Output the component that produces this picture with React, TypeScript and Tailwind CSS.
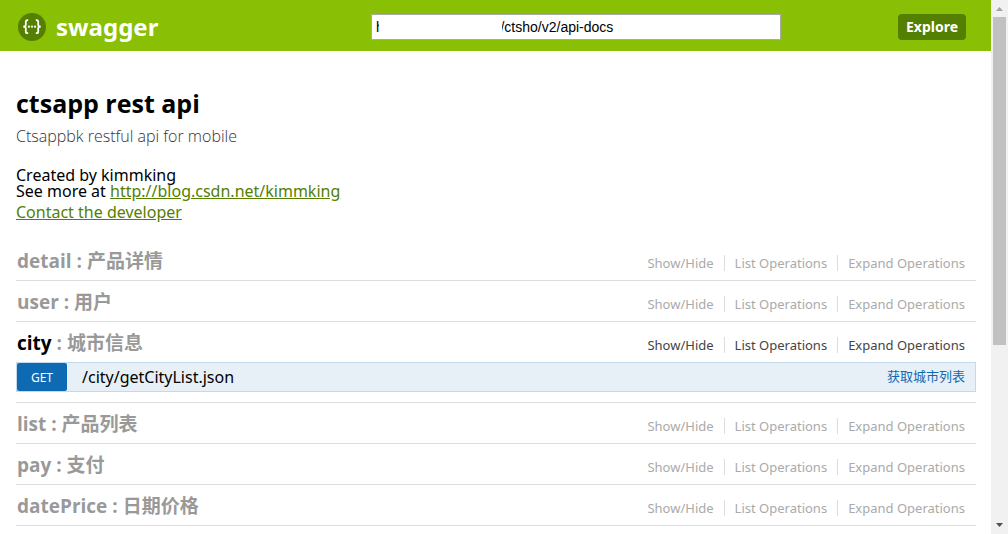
import { useState } from "react";

type Resource = {
  name: string;
  description: string;
  active?: boolean;
  operation?: { method: string; path: string; summary: string };
};

const resources: Resource[] = [
  { name: "detail", description: "产品详情" },
  { name: "user", description: "用户" },
  {
    name: "city",
    description: "城市信息",
    active: true,
    operation: { method: "GET", path: "/city/getCityList.json", summary: "获取城市列表" },
  },
  { name: "list", description: "产品列表" },
  { name: "pay", description: "支付" },
  { name: "datePrice", description: "日期价格" },
];

const HOST_GAP = "\u00a0".repeat(30);

function Logo() {
  return (
    <svg className="size-7" viewBox="0 0 28 28" aria-hidden="true">
      <circle cx="14" cy="14" r="14" fill="#547f00" />
      <g fill="none" stroke="#fff" strokeWidth="1.8">
        <path d="M10.2 7.2H9.4Q7.8 7.2 7.8 8.9V11.8Q7.8 13.7 5.2 13.7Q7.8 13.7 7.8 15.6V18.5Q7.8 20.2 9.4 20.2H10.2" />
        <path d="M17.8 7.2H18.6Q20.2 7.2 20.2 8.9V11.8Q20.2 13.7 22.8 13.7Q20.2 13.7 20.2 15.6V18.5Q20.2 20.2 18.6 20.2H17.8" />
      </g>
      <g fill="#fff">
        <circle cx="10.9" cy="13.7" r="1.1" />
        <circle cx="14" cy="13.7" r="1.1" />
        <circle cx="17.1" cy="13.7" r="1.1" />
      </g>
    </svg>
  );
}

function Header() {
  const [url, setUrl] = useState(`h${HOST_GAP}/ctsho/v2/api-docs`);
  return (
    <header className="bg-[#89bf04]">
      <div className="flex h-[51px] items-center pt-[3px] pr-[25px] pl-[18px]">
        <div className="flex flex-[353]">
          <a href="#top" className="flex items-center gap-[10px] font-['Noto_Sans',sans-serif] text-2xl leading-7 font-bold text-white">
            <Logo />
            swagger
          </a>
        </div>
        <div className="relative w-[410px]">
          <input
            aria-label="API URL"
            value={url}
            onChange={(e) => setUrl(e.target.value)}
            className="block h-[26px] w-full border border-[#aaaaaa] bg-white px-1 font-['Liberation_Sans',sans-serif] text-sm text-black"
          />
          <span className="absolute top-1 left-2 h-[18px] w-[123px] bg-white" />
        </div>
        <div className="flex flex-[185] justify-end">
          <button className="h-[26px] rounded bg-[#547f00] px-2 text-sm font-bold text-white">
            Explore
          </button>
        </div>
      </div>
    </header>
  );
}

function ResourceItem({ name, description, active, operation }: Resource) {
  return (
    <li className="border-b border-[#dddddd]">
      <div className="flex h-10 items-center justify-between pt-px pr-[11px] pl-px">
        <h2 className="font-['Open_Sans','Noto_Sans_CJK_SC',sans-serif] text-[19px] leading-10 font-bold text-[#999999]">
          <a href={`#${name}`} className={active ? "text-black" : "text-[#999999]"}>
            {name}
          </a>
          {" : "}
          {description}
        </h2>
        <div
          className={`flex items-center pt-1 text-[13px] leading-4 ${active ? "text-[#444444]" : "text-[#aaaaaa]"}`}
        >
          <a href={`#${name}-toggle`} className="border-r border-[#dddddd] pr-[10px]">
            Show/Hide
          </a>
          <a href={`#${name}-list`} className="border-r border-[#dddddd] px-[10px]">
            List Operations
          </a>
          <a href={`#${name}-expand`} className="pl-[10px]">
            Expand Operations
          </a>
        </div>
      </div>
      {operation && (
        <div className="mb-[10px] flex h-[30px] items-center border border-[#c3d9ec] bg-[#e7f0f7]">
          <a
            href="#operation"
            className="flex h-7 w-[50px] items-center justify-center rounded-xs bg-[#0f6ab4] pt-[2px] text-xs text-white"
          >
            {operation.method}
          </a>
          <a href="#operation" className="pl-[15px] text-base text-black">
            {operation.path}
          </a>
          <a href="#operation" className="ml-auto pr-[10px] text-[13px] text-[#0f6ab4]">
            {operation.summary}
          </a>
        </div>
      )}
    </li>
  );
}

function Scrollbar() {
  return (
    <div className="flex w-[17px] shrink-0 flex-col items-center bg-[#f1f1f1]" aria-hidden="true">
      <svg className="h-[17px] w-[17px] shrink-0" viewBox="0 0 17 17">
        <path d="M5 11L8.5 7L12 11Z" fill="#a3a3a3" />
      </svg>
      <div className="min-h-0 w-[13px] flex-[328] bg-[#c1c1c1]" />
      <div className="min-h-0 flex-[172]" />
      <svg className="h-[17px] w-[17px] shrink-0" viewBox="0 0 17 17">
        <path d="M5 6L8.5 10L12 6Z" fill="#505050" />
      </svg>
    </div>
  );
}

export default function App() {
  return (
    <div className="flex h-screen bg-white font-['Noto_Sans','Noto_Sans_CJK_SC',sans-serif]">
      <div id="top" className="min-w-0 flex-1 overflow-hidden">
        <Header />
        <main className="pr-[15px] pl-4">
          <section className="pt-9 text-base leading-4 text-black">
            <h1 className="font-['Open_Sans',sans-serif] text-[25px] leading-8 font-bold">ctsapp rest api</h1>
            <p className="pt-[5px] font-['Open_Sans',sans-serif] text-base leading-6 font-light text-[#333333]">
              Ctsappbk restful api for mobile
            </p>
            <div className="pt-[19px]">Created by kimmking</div>
            <div>
              See more at{" "}
              <a href="http://blog.csdn.net/kimmking" className="text-[#547f00] underline">
                http://blog.csdn.net/kimmking
              </a>
            </div>
            <div className="pt-[5px]">
              <a href="#contact" className="text-[#547f00] underline">
                Contact the developer
              </a>
            </div>
          </section>
          <ul className="pt-5">
            {resources.map((r) => (
              <ResourceItem key={r.name} {...r} />
            ))}
          </ul>
        </main>
      </div>
      <Scrollbar />
    </div>
  );
}
